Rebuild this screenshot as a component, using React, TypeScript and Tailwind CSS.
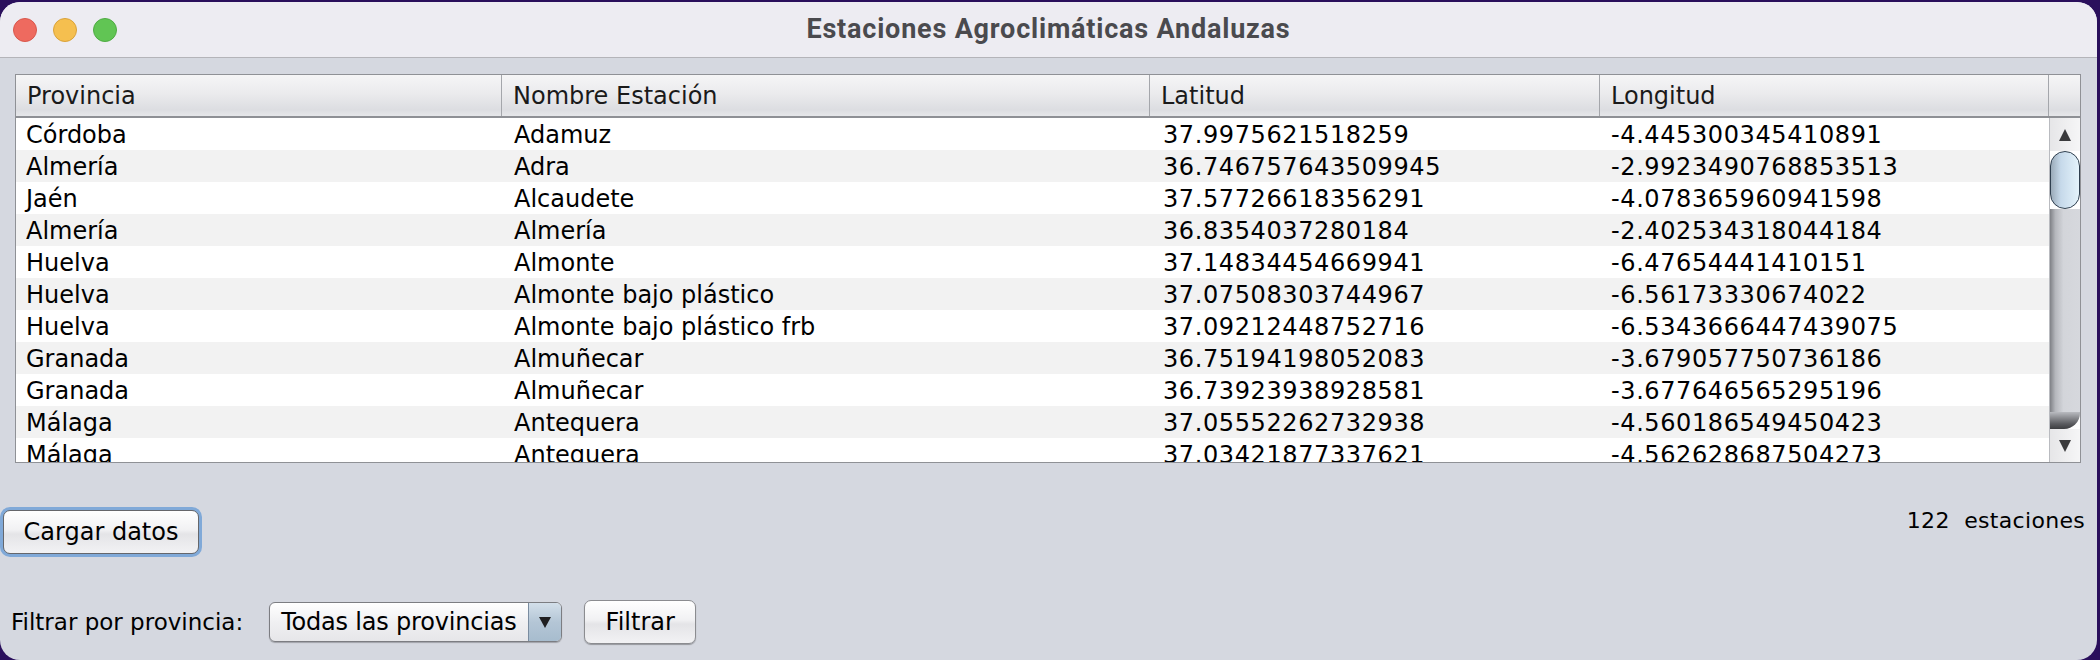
const rows: [string, string, string, string][] = [
  ['Córdoba', 'Adamuz', '37.9975621518259', '-4.445300345410891'],
  ['Almería', 'Adra', '36.746757643509945', '-2.9923490768853513'],
  ['Jaén', 'Alcaudete', '37.57726618356291', '-4.078365960941598'],
  ['Almería', 'Almería', '36.8354037280184', '-2.402534318044184'],
  ['Huelva', 'Almonte', '37.14834454669941', '-6.47654441410151'],
  ['Huelva', 'Almonte bajo plástico', '37.07508303744967', '-6.56173330674022'],
  ['Huelva', 'Almonte bajo plástico frb', '37.09212448752716', '-6.5343666447439075'],
  ['Granada', 'Almuñecar', '36.75194198052083', '-3.679057750736186'],
  ['Granada', 'Almuñecar', '36.73923938928581', '-3.677646565295196'],
  ['Málaga', 'Antequera', '37.05552262732938', '-4.560186549450423'],
  ['Málaga', 'Antequera', '37.03421877337621', '-4.562628687504273'],
];

const font = { fontFamily: '"DejaVu Sans", "Liberation Sans", sans-serif' };

function HeaderCell({ label, w, border = true }: { label?: string; w: string; border?: boolean }) {
  return (
    <div
      className={`${w} h-full flex items-center pl-[11px] text-[24px] text-[#1a1a1a] ${
        border ? 'border-r border-[#a4a6ab]' : ''
      }`}
    >
      {label}
    </div>
  );
}

function Scrollbar() {
  return (
    <div className="w-[31px] h-full flex flex-col border-l border-[#b9bbc0]">
      {/* up arrow */}
      <div className="h-[33px] bg-[linear-gradient(to_right,#e6e6e8,#f6f6f7)] flex items-center justify-center">
        <svg width="14" height="14" viewBox="0 0 14 14">
          <path d="M7 1 L13 13 L1 13 Z" fill="#3a3a3c" />
        </svg>
      </div>
      {/* thumb */}
      <div className="h-[58px] rounded-[29px] border-[1.5px] border-[#2f3f4f] bg-[linear-gradient(to_right,#9aaab8,#c6d9ea_35%,#e4f3fb)]" />
      {/* track */}
      <div className="flex-1 bg-[linear-gradient(to_right,#7f8186,#b5b7bc_18%,#d3d5da_45%,#d6d8dd)]" />
      <div className="h-[17px] rounded-br-[16px] bg-[linear-gradient(to_bottom,#b9bbc0,#5a5b5f_70%,#3c3d40)]" />
      {/* down arrow */}
      <div className="h-[33px] bg-[linear-gradient(to_right,#e6e6e8,#f6f6f7)] flex items-center justify-center">
        <svg width="14" height="14" viewBox="0 0 14 14">
          <path d="M1 1 L13 1 L7 13 Z" fill="#3a3a3c" />
        </svg>
      </div>
    </div>
  );
}

export default function App() {
  return (
    <div className="w-[2100px] h-[660px] bg-[#2a0f5c] pt-[2px] pr-[3px] overflow-hidden" style={font}>
      <div className="w-[2097px] h-[658px] rounded-[20px] overflow-hidden bg-[#d5d8e0] flex flex-col">
        {/* Title bar */}
        <div className="relative h-[56px] shrink-0 bg-[#edecf2] border-b border-[#b4b4b9] flex items-center">
          <div className="flex items-center gap-[16px] pl-[13px]">
            <div className="w-[24px] h-[24px] rounded-full bg-[#ee6a5f] border border-[#d8574c]" />
            <div className="w-[24px] h-[24px] rounded-full bg-[#f5bf4f] border border-[#d9a23a]" />
            <div className="w-[24px] h-[24px] rounded-full bg-[#61c554] border border-[#4fab43]" />
          </div>
          <div
            className="absolute inset-0 flex items-center justify-center text-[27px] font-bold tracking-[0.8px] text-[#4a4a4e]"
            style={{ fontFamily: 'Roboto, "Liberation Sans", sans-serif' }}
          >
            Estaciones Agroclimáticas Andaluzas
          </div>
        </div>

        {/* Table */}
        <div className="mt-[16px] ml-[15px] mr-[16px] border border-[#8f9196] bg-white">
          <div className="h-[43px] flex border-b-2 border-[#8e9095] bg-[linear-gradient(to_bottom,#f5f5f6,#ebebed_45%,#dcdde1_85%,#e6e7ea)]">
            <HeaderCell w="w-[486px]" label="Provincia" />
            <HeaderCell w="w-[648px]" label="Nombre Estación" />
            <HeaderCell w="w-[450px]" label="Latitud" />
            <HeaderCell w="w-[449px]" label="Longitud" />
            <HeaderCell w="w-[31px]" border={false} />
          </div>
          <div className="h-[344px] flex overflow-hidden">
            <div className="w-[2033px] h-full overflow-hidden">
              {rows.map((r, i) => (
                <div
                  key={i}
                  className={`h-[32px] flex items-center text-[24px] text-black ${
                    i % 2 === 1 ? 'bg-[#f2f2f2]' : 'bg-white'
                  }`}
                >
                  <div className="w-[486px] pl-[10px] pt-[2px]">{r[0]}</div>
                  <div className="w-[648px] pl-[12px] pt-[2px]">{r[1]}</div>
                  <div className="w-[450px] pl-[13px] pt-[2px] tracking-[0.6px]">{r[2]}</div>
                  <div className="w-[449px] pl-[11px] pt-[2px] tracking-[0.6px]">{r[3]}</div>
                </div>
              ))}
            </div>
            <Scrollbar />
          </div>
        </div>

        {/* Load button + count */}
        <div className="mt-[44px] flex justify-between">
          <div className="p-[3px] rounded-[10px] bg-[#80a9d8]">
            <button className="w-[196px] h-[44px] rounded-[7px] border border-[#66676b] bg-[linear-gradient(to_bottom,#ffffff,#f1f1f3_45%,#e4e4e7_55%,#f2f2f4)] text-[24px] text-black">
              Cargar datos
            </button>
          </div>
          <div className="self-start -mt-[3px] pr-[12px] text-[22px] text-black whitespace-pre tracking-[0.3px]">
            122  estaciones
          </div>
        </div>

        {/* Filter row */}
        <div className="mt-[43px] flex items-center pl-[11px]">
          <span className="text-[23px] text-black">Filtrar por provincia:</span>
          <div className="ml-[26px] w-[293px] h-[40px] rounded-[6px] border border-[#7c7d82] flex overflow-hidden bg-[linear-gradient(to_bottom,#ffffff,#f0f0f2_50%,#e6e6e9)] shadow-[0_1px_1px_rgba(0,0,0,0.25)]">
            <div className="flex-1 flex items-center pl-[11px] text-[24px] tracking-[-0.2px] text-black">Todas las provincias</div>
            <div className="w-[33px] border-l border-[#7a8ca0] flex items-center justify-center bg-[linear-gradient(to_bottom,#d3dfea,#b4c6d6_50%,#a7bcce)]">
              <svg width="14" height="13" viewBox="0 0 14 13">
                <path d="M1 1 L13 1 L7 12 Z" fill="#1f1f21" />
              </svg>
            </div>
          </div>
          <button className="ml-[22px] w-[112px] h-[44px] rounded-[7px] border border-[#8b8c90] bg-[linear-gradient(to_bottom,#ffffff,#f1f1f3_45%,#e4e4e7_55%,#f2f2f4)] shadow-[0_1px_1px_rgba(0,0,0,0.3)] text-[24px] text-black">
            Filtrar
          </button>
        </div>
      </div>
    </div>
  );
}
